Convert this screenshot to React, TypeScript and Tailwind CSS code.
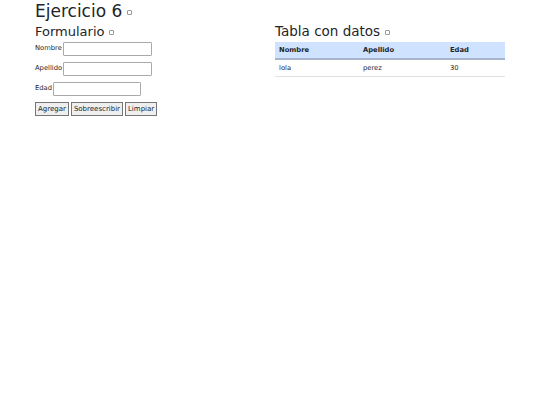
import React from "react";

const rows = [{ nombre: "lola", apellido: "perez", edad: "30" }];

function Box() {
  return (
    <span className="inline-block w-[5px] h-[5px] border border-[#999] rounded-[1px] ml-[5px] align-middle"></span>
  );
}

export default function App() {
  return (
    <div className="min-h-[405px] w-[540px] bg-white text-[#212529] font-['DejaVu_Sans',sans-serif]">
      <div className="px-[35px]">
        <h1 className="text-[17px] leading-[20px] mt-[1px]">
          Ejercicio 6
          <Box />
        </h1>
        <div className="flex">
          <div className="w-[240px]">
            <h3 className="text-[13px] leading-[17px] mt-[2px]">
              Formulario
              <Box />
            </h3>
            <div className="text-[6.75px] mt-[2px]">
              <div className="flex items-end h-[14px]">
                <span className="mb-[3px]">Nombre</span>
                <input className="ml-[1px] w-[89px] h-[14px] border border-[#aaa] rounded-[1px]" />
              </div>
              <div className="flex items-end h-[14px] mt-[6px]">
                <span className="mb-[3px]">Apellido</span>
                <input className="ml-[1px] w-[89px] h-[14px] border border-[#aaa] rounded-[1px]" />
              </div>
              <div className="flex items-end h-[14px] mt-[6px]">
                <span className="mb-[3px]">Edad</span>
                <input className="ml-[1px] w-[88px] h-[14px] border border-[#aaa] rounded-[1px]" />
              </div>
              <div className="flex gap-[2px] mt-[6px]">
                <button className="h-[14px] px-[2px] bg-[#efefef] border border-[#767676] text-[7px] leading-none">Agregar</button>
                <button className="h-[14px] px-[2px] bg-[#efefef] border border-[#767676] text-[7px] leading-none">Sobreescribir</button>
                <button className="h-[14px] px-[2px] bg-[#efefef] border border-[#767676] text-[7px] leading-none">Limpiar</button>
              </div>
            </div>
          </div>
          <div className="w-[230px]">
            <h3 className="text-[13.5px] leading-[17px] mt-[2px]">
              Tabla con datos
              <Box />
            </h3>
            <table className="w-full mt-[2px] text-[6.75px] border-collapse">
              <thead>
                <tr className="bg-[#cfe2ff] border-b-2 border-[#a6b5cc]">
                  <th className="text-left font-bold px-[4px] h-[17px] w-[84px]">Nombre</th>
                  <th className="text-left font-bold px-[4px] w-[87px]">Apellido</th>
                  <th className="text-left font-bold px-[4px]">Edad</th>
                </tr>
              </thead>
              <tbody>
                {rows.map((r, i) => (
                  <tr key={i} className="border-b border-[#dee2e6]">
                    <td className="px-[4px] h-[17px]">{r.nombre}</td>
                    <td className="px-[4px]">{r.apellido}</td>
                    <td className="px-[4px]">{r.edad}</td>
                  </tr>
                ))}
              </tbody>
            </table>
          </div>
        </div>
      </div>
    </div>
  );
}
